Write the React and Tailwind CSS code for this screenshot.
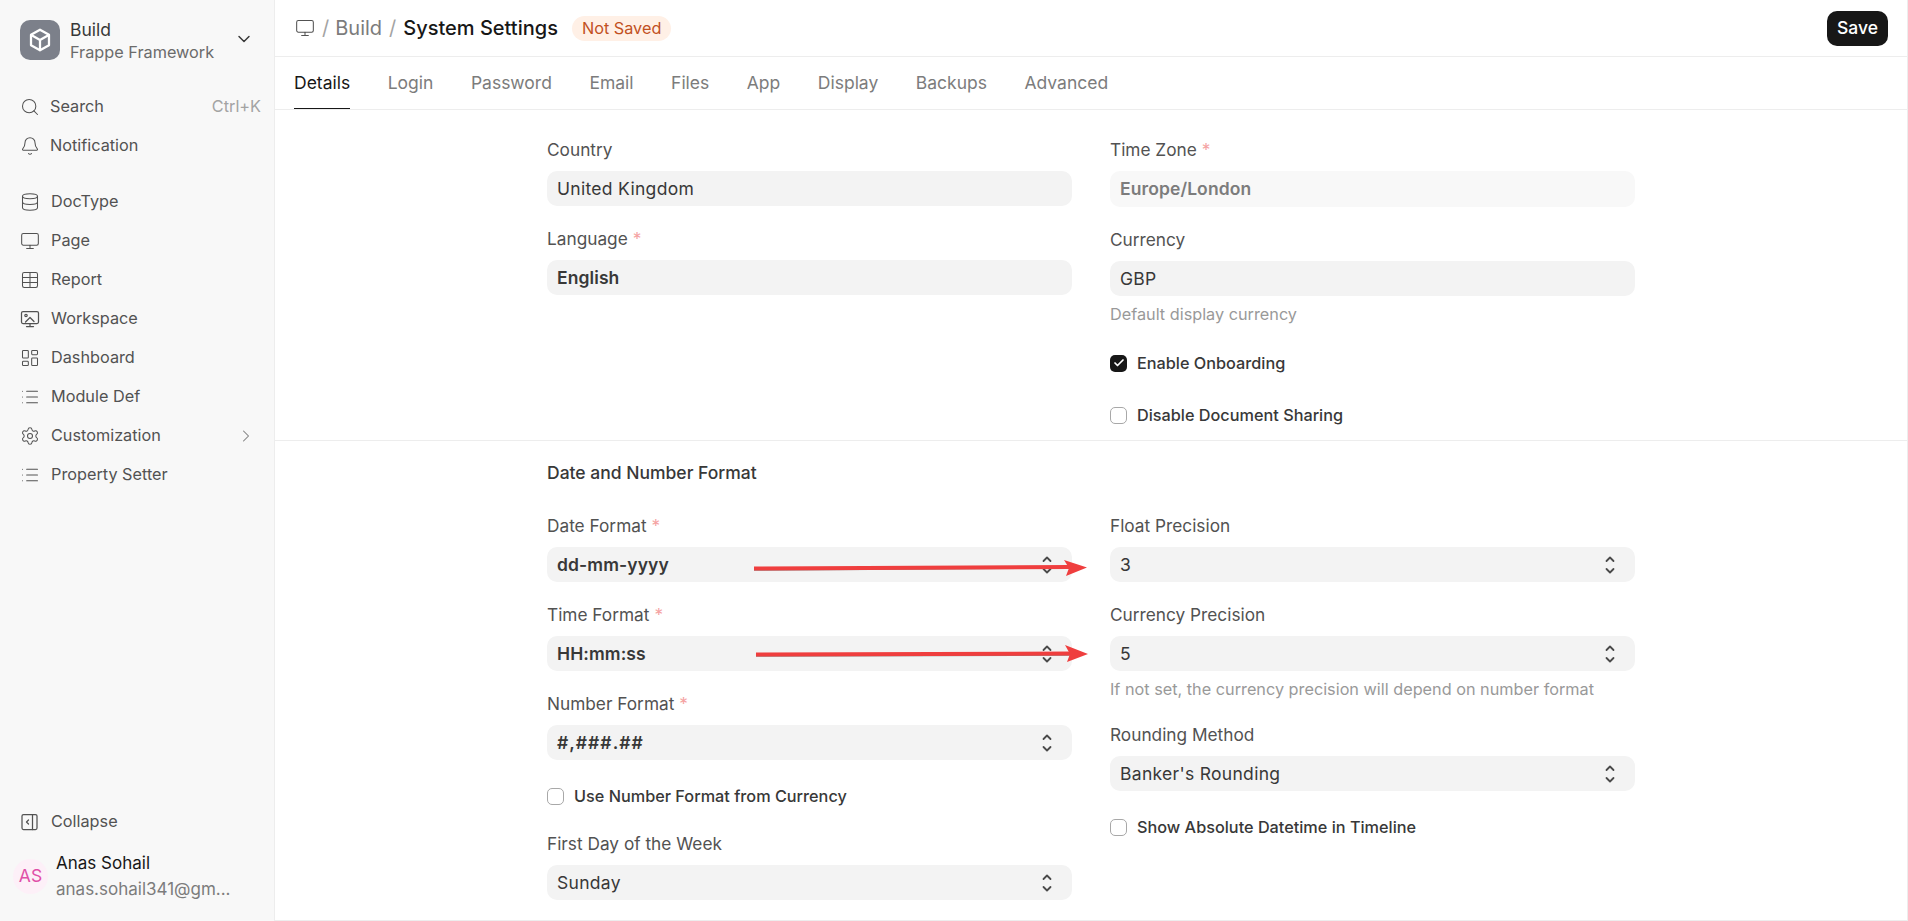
import React from "react";
import { Bell, Check, ChevronDown, ChevronRight, Database, LayoutDashboard, List, Monitor, Search, Settings, Table } from "lucide-react";

const TABS = ["Details", "Login", "Password", "Email", "Files", "App", "Display", "Backups", "Advanced"];

const CubeIcon = () => (
  <svg width="26" height="26" viewBox="0 0 24 24" fill="none" stroke="currentColor" strokeWidth="2.1" strokeLinecap="round" strokeLinejoin="round">
    <path d="M12 2.5l8.3 4.7v9.6L12 21.5l-8.3-4.7V7.2z" />
    <path d="M3.9 7.4L12 12l8.1-4.6M12 12v9.3" />
  </svg>
);

const WorkspaceIcon = () => (
  <svg width="20" height="20" viewBox="0 0 20 20" fill="none" stroke="currentColor" strokeWidth="1.25" strokeLinecap="round" strokeLinejoin="round">
    <rect x="1.5" y="2.5" width="17" height="12" rx="1.5" />
    <path d="M10 14.5v3M6.5 17.5h7" />
    <circle cx="6" cy="6.5" r="1.2" />
    <path d="M5.5 13l4.5-4.5 4 4" />
  </svg>
);

const CollapseIcon = () => (
  <svg width="20" height="20" viewBox="0 0 20 20" fill="none" stroke="currentColor" strokeWidth="1.25" strokeLinecap="round" strokeLinejoin="round">
    <rect x="2" y="2.5" width="15" height="15" rx="1.5" />
    <path d="M12.5 2.5v15M8.5 8l-2 2 2 2" />
  </svg>
);

const NAV = [
  { label: "DocType", icon: <Database size={20} strokeWidth={1.25} /> },
  { label: "Page", icon: <Monitor size={20} strokeWidth={1.25} /> },
  { label: "Report", icon: <Table size={20} strokeWidth={1.25} /> },
  { label: "Workspace", icon: <WorkspaceIcon /> },
  { label: "Dashboard", icon: <LayoutDashboard size={20} strokeWidth={1.25} /> },
  { label: "Module Def", icon: <List size={20} strokeWidth={1.25} /> },
  { label: "Customization", icon: <Settings size={20} strokeWidth={1.25} />, more: true },
  { label: "Property Setter", icon: <List size={20} strokeWidth={1.25} /> },
];

function Sidebar() {
  return (
    <aside className="flex w-[275px] shrink-0 flex-col border-r border-[#ededed] bg-[#f8f8f8] text-[16.25px] text-[#525252]">
      <div className="flex h-[87px] shrink-0 items-start pl-5 pr-5 pt-5">
        <div className="flex h-10 w-10 items-center justify-center rounded-[10px] bg-[#7c808a] text-white">
          <CubeIcon />
        </div>
        <div className="-mt-0.5 ml-2.5 flex-1 leading-[23px]">
          <div className="text-[17.5px] text-[#383838]">Build</div>
          <div className="text-[#6b6b6b]">Frappe Framework</div>
        </div>
        <ChevronDown size={20} strokeWidth={1.75} className="mt-[9px] text-[#383838]" />
      </div>

      <div className="flex h-[39px] items-center pl-5 pr-[13px]">
        <Search size={20} strokeWidth={1.25} />
        <span className="ml-2.5 flex-1">Search</span>
        <span className="text-[#a3a3a3]">Ctrl+K</span>
      </div>
      <div className="flex h-[39px] items-center pl-5 pr-3.5">
        <Bell size={20} strokeWidth={1.25} />
        <span className="ml-2.5">Notification</span>
      </div>

      <nav className="mt-[17px] flex flex-col">
        {NAV.map((item) => (
          <div key={item.label} className="flex h-[39px] items-center pl-5 pr-[18px]">
            {item.icon}
            <span className="ml-[11px] flex-1">{item.label}</span>
            {item.more && <ChevronRight size={20} strokeWidth={1.25} className="text-[#7c7c7c]" />}
          </div>
        ))}
      </nav>

      <div className="mt-auto flex h-[39px] items-center pl-5">
        <CollapseIcon />
        <span className="ml-[11px]">Collapse</span>
      </div>
      <div className="mb-2.5 flex h-[70px] items-center pl-[13px]">
        <div className="flex h-[35px] w-[35px] items-center justify-center rounded-full bg-[#fdf0f8] text-[17.5px] text-[#e04fa8]">AS</div>
        <div className="ml-2 text-[17px] leading-[26px]">
          <div className="text-[#171717]">Anas Sohail</div>
          <div className="text-[#7c7c7c]">anas.sohail341@gm...</div>
        </div>
      </div>
    </aside>
  );
}

function Header() {
  return (
    <div className="flex h-[57px] shrink-0 items-center border-b border-[#ededed] pl-5 pr-[19px]">
      <Monitor size={20} strokeWidth={1.25} className="text-[#525252]" />
      <span className="ml-[7px] text-[20px] text-[#a3a3a3]">/</span>
      <span className="ml-[6px] text-[20px] text-[#7c7c7c]">Build</span>
      <span className="ml-[7px] text-[20px] text-[#a3a3a3]">/</span>
      <span className="ml-[7px] text-[20px] font-medium text-[#171717]">System Settings</span>
      <span className="ml-3.5 flex h-[25px] items-center rounded-full bg-[#fff0e6] px-[10px] text-[16.25px] text-[#c2501f]">Not Saved</span>
      <button className="ml-auto h-[35px] rounded-[10px] bg-[#171717] px-[10px] text-[17.5px] font-medium text-white">Save</button>
    </div>
  );
}

function Tabs() {
  return (
    <div className="flex h-[53px] shrink-0 gap-[37.5px] border-b border-[#ededed] pl-[19px]">
      {TABS.map((tab, i) => (
        <div key={tab} className={i === 0 ? "flex items-center border-b border-[#171717] pt-[1px] text-[17.5px] text-[#171717]" : "flex items-center pt-[1px] text-[17.5px] text-[#7c7c7c]"}>
          {tab}
        </div>
      ))}
    </div>
  );
}

const Req = () => <span className="ml-[5px] text-[#f5a3a3]">*</span>;

function Label({ children, req }) {
  return (
    <div className="mb-[11px] h-5 text-[17.25px] leading-5 text-[#525252]">
      {children}
      {req && <Req />}
    </div>
  );
}

const Updown = () => (
  <svg width="10" height="18" viewBox="0 0 10 18" fill="none" stroke="#4a4a4a" strokeWidth="1.8" strokeLinecap="round" strokeLinejoin="round">
    <path d="M1.5 5L5 1.5L8.5 5M1.5 13L5 16.5L8.5 13" />
  </svg>
);

function Input({ value, strong, select, disabled, wide }) {
  let tone = "h-[35px] bg-[#f3f3f3] text-[#383838]";
  if (disabled) tone = "h-[36px] bg-[#f8f8f8] font-semibold text-[#7c7c7c]";
  else if (strong) tone = "h-[35px] bg-[#f3f3f3] font-semibold text-[#383838]";
  let spacing = "tracking-[0.3px]";
  if (wide) spacing = "tracking-[1px]";
  else if (strong || disabled) spacing = "tracking-[0.1px]";
  return (
    <div className={"flex items-center justify-between rounded-[10px] pl-2.5 pr-5 pt-px text-[17.5px] " + tone}>
      <span className={spacing}>{value}</span>
      {select && <Updown />}
    </div>
  );
}

function Field({ label, req, mb = "mb-[23px]", ...rest }) {
  return (
    <div className={mb}>
      <Label req={req}>{label}</Label>
      <Input {...rest} />
    </div>
  );
}

function Desc({ children }) {
  return <div className="mt-2 h-5 text-[16.25px] leading-5 text-[#999999]">{children}</div>;
}

function Checkbox({ label, checked, className = "" }) {
  return (
    <div className={"flex h-5 items-center text-[16.25px] font-medium text-[#383838] " + className}>
      {checked ? (
        <span className="flex h-[17px] w-[17px] items-center justify-center rounded-[5px] bg-[#171717] text-white">
          <Check size={12} strokeWidth={3.5} />
        </span>
      ) : (
        <span className="h-[17px] w-[17px] rounded-[5px] border border-[#a8a8a8] bg-white" />
      )}
      <span className="ml-2.5">{label}</span>
    </div>
  );
}

function Arrows() {
  return (
    <svg className="pointer-events-none absolute left-0 top-0" width="1908" height="921" fill="none">
      <path d="M754 570L1072 568" stroke="#8a8a8a" strokeWidth="1.5" />
      <path d="M754 568.5L1070 567" stroke="#ef3e3e" strokeWidth="4" />
      <path d="M1064 560L1087 567.5L1066 576L1069 568Z" fill="#ef3e3e" />
      <path d="M756 656L1074 655" stroke="#8a8a8a" strokeWidth="1.5" />
      <path d="M756 654.5L1072 653.5" stroke="#ef3e3e" strokeWidth="4" />
      <path d="M1065 645L1088 654L1067 662L1070 654Z" fill="#ef3e3e" />
    </svg>
  );
}

export default function App() {
  return (
    <div className="relative flex h-screen overflow-hidden bg-white font-['Inter',sans-serif]">
      <Sidebar />
      <main className="flex min-w-0 flex-1 flex-col border-r border-[#ededed]">
        <Header />
        <Tabs />

        <section className="h-[331px] shrink-0 border-b border-[#ededed] pt-[30px]">
          <div className="mx-auto grid w-[1088px] grid-cols-2 gap-x-[38px]">
            <div>
              <Field label="Country" value="United Kingdom" />
              <Field label="Language" req value="English" strong />
            </div>
            <div>
              <Field label="Time Zone" req value="Europe/London" disabled />
              <Field label="Currency" value="GBP" mb="mb-0" />
              <Desc>Default display currency</Desc>
              <Checkbox label="Enable Onboarding" checked className="mt-[29px]" />
              <Checkbox label="Disable Document Sharing" className="mt-8" />
            </div>
          </div>
        </section>

        <section className="flex-1 border-b border-[#ededed] pt-[22px]">
          <div className="mx-auto w-[1088px]">
            <div className="mb-[33px] h-5 text-[17.5px] font-medium leading-5 text-[#383838]">Date and Number Format</div>
            <div className="grid grid-cols-2 gap-x-[38px]">
              <div>
                <Field label="Date Format" req value="dd-mm-yyyy" strong select />
                <Field label="Time Format" req value="HH:mm:ss" strong select />
                <Field label="Number Format" req value="#,###.##" strong select wide mb="mb-0" />
                <Checkbox label="Use Number Format from Currency" className="mt-[26px]" />
                <div className="mt-7">
                  <Label>First Day of the Week</Label>
                  <Input value="Sunday" select />
                </div>
              </div>
              <div>
                <Field label="Float Precision" value="3" select />
                <Field label="Currency Precision" value="5" select mb="mb-0" />
                <Desc>If not set, the currency precision will depend on number format</Desc>
                <div className="mt-[26px]">
                  <Label>Rounding Method</Label>
                  <Input value="Banker's Rounding" select />
                </div>
                <Checkbox label="Show Absolute Datetime in Timeline" className="mt-[26px]" />
              </div>
            </div>
          </div>
        </section>
      </main>
      <Arrows />
    </div>
  );
}
